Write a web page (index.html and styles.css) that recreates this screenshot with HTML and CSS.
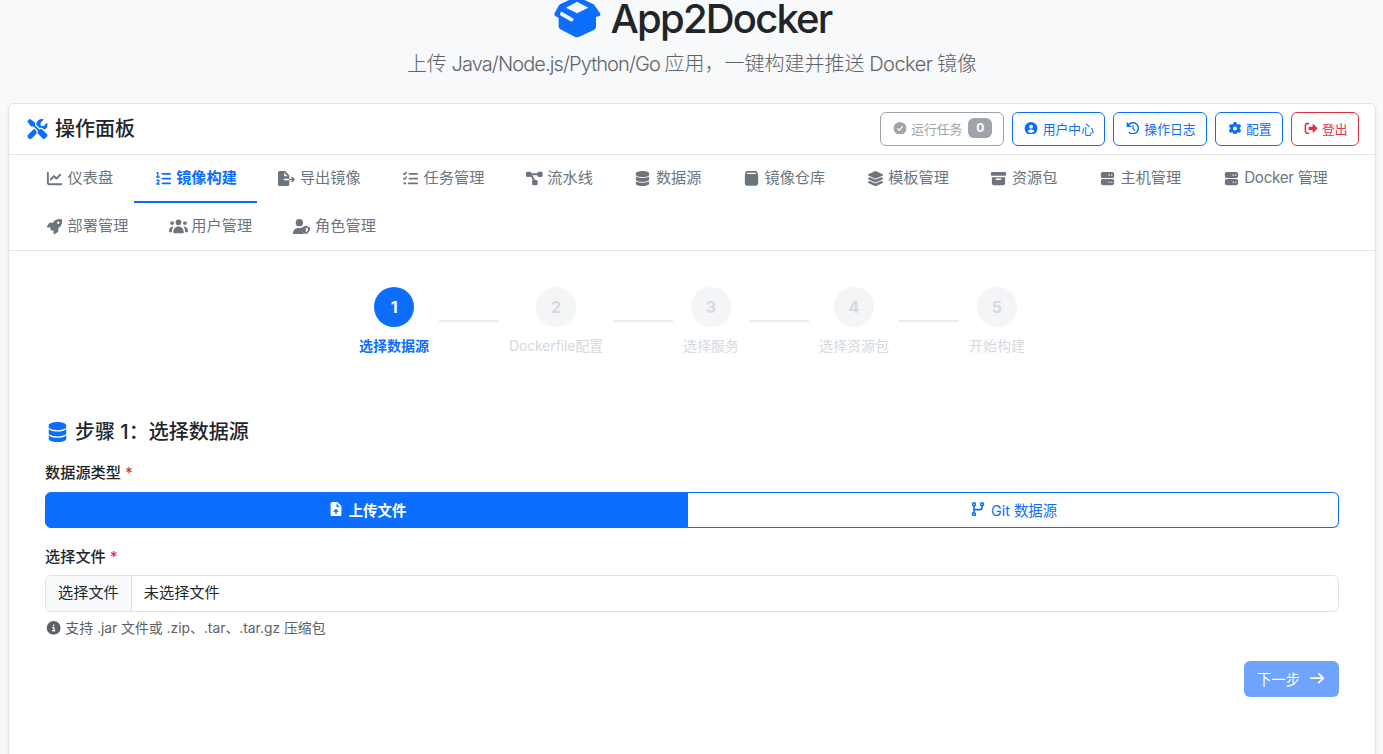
FILE: index.html
```html
<!DOCTYPE html>
<html lang="zh-CN">
<head>
    <meta charset="UTF-8">
    <meta name="viewport" content="width=device-width, initial-scale=1.0">
    <title>App2Docker</title>
    <link rel="stylesheet" href="styles.css">
</head>
<body>
    <svg class="sprite" xmlns="http://www.w3.org/2000/svg">
        <symbol id="i-box" viewBox="13 -18 150 150"><path fill-rule="evenodd" d="M80 -7Q88 -11 96 -7L136 12Q140 14 142 18L157 40Q160 46 155 48L145 51V80Q145 86 140 89L95 110Q88 113 81 110L38 88Q33 85 33 79V54L23 48Q18 45 21 39L34 16Q36 13 40 11ZM88 5L55 23L88 40L122 23ZM40 36Q34 42 40 47L69 64Q74 66 77 60Q79 56 74 54L45 37Q42 35 40 36Z"/></symbol>
        <symbol id="i-tools" viewBox="-64 0 640 512"><path d="M78.6 5C69.1-2.4 55.6-1.5 47 7L7 47c-8.5 8.5-9.4 22-2.1 31.6l80 104c4.5 5.9 11.6 9.4 19 9.4h54.1l109 109c-14.7 29-10 65.4 14.3 89.6l112 112c12.5 12.5 32.8 12.5 45.3 0l64-64c12.5-12.5 12.5-32.8 0-45.3l-112-112c-24.2-24.2-60.6-29-89.6-14.3l-109-109V104c0-7.5-3.5-14.5-9.4-19L78.6 5zM19.9 396.1C7.2 408.8 0 426.1 0 444.1C0 481.6 30.4 512 67.9 512c18 0 35.3-7.2 48-19.9L233.7 374.3c-7.8-20.9-9-43.6-3.6-65.1l-61.7-61.7L19.9 396.1zM512 144c0-10.5-1.1-20.7-3.2-30.5c-2.4-11.2-16.1-14.1-24.2-6l-63.9 63.9c-3 3-7.1 4.7-11.3 4.7H352c-8.8 0-16-7.2-16-16V102.6c0-4.2 1.7-8.3 4.7-11.3l63.9-63.9c8.1-8.1 5.2-21.8-6-24.2C388.7 1.1 378.5 0 368 0C288.5 0 224 64.5 224 144l0 .8 85.3 85.3c36-9.1 75.8 .5 104 28.7L429 274.5c49-23 83-72.8 83-130.5z"/></symbol>
        <symbol id="i-check" viewBox="-64 0 640 512"><path fill-rule="evenodd" d="M256 512A256 256 0 1 0 256 0a256 256 0 1 0 0 512zM374 192L258 353c-9 12-27 13-37 3l-72-72c-22-23 11-56 34-34l50 50 102-140c20-25 57 5 39 32z"/></symbol>
        <symbol id="i-user-circle" viewBox="-64 0 640 512"><path fill-rule="evenodd" d="M256 512A256 256 0 1 0 256 0a256 256 0 1 0 0 512zM256 112a76 76 0 1 1 0 152 76 76 0 1 1 0-152zM128 384c8-52 50-82 98-82h60c48 0 90 30 98 82-70 74-186 74-256 0z"/></symbol>
        <symbol id="i-history" viewBox="-64 0 640 512"><path class="stroke" stroke-width="60" d="M32 40v128h128M46 162A222 222 0 1 1 105 418"/><path class="stroke" stroke-width="48" d="M256 148v112l74 74"/></symbol>
        <symbol id="i-gear" viewBox="-64 0 640 512"><path d="M495.9 166.6c3.2 8.7 .5 18.4-6.4 24.6l-43.3 39.4c1.1 8.3 1.7 16.8 1.7 25.4s-.6 17.1-1.7 25.4l43.3 39.4c6.9 6.2 9.6 15.9 6.4 24.6c-4.4 11.9-9.7 23.3-15.8 34.3l-4.7 8.1c-6.6 11-14 21.4-22.1 31.2c-5.9 7.2-15.7 9.6-24.5 6.8l-55.7-17.7c-13.4 10.3-28.2 18.9-44 25.4l-12.5 57.1c-2 9.1-9 16.3-18.2 17.8c-13.8 2.3-28 3.5-42.5 3.5s-28.7-1.2-42.5-3.5c-9.2-1.5-16.2-8.7-18.2-17.8l-12.5-57.1c-15.8-6.5-30.6-15.1-44-25.4L83.1 425.9c-8.8 2.8-18.6 .3-24.5-6.8c-8.1-9.8-15.5-20.2-22.1-31.2l-4.7-8.1c-6.1-11-11.4-22.4-15.8-34.3c-3.2-8.7-.5-18.4 6.4-24.6l43.3-39.4C64.6 273.1 64 264.6 64 256s.6-17.1 1.7-25.4L22.4 191.2c-6.9-6.2-9.6-15.9-6.4-24.6c4.4-11.9 9.7-23.3 15.8-34.3l4.7-8.1c6.6-11 14-21.4 22.1-31.2c5.9-7.2 15.7-9.6 24.5-6.8l55.7 17.7c13.4-10.3 28.2-18.9 44-25.4l12.5-57.1c2-9.1 9-16.3 18.2-17.8C227.3 1.2 241.5 0 256 0s28.7 1.2 42.5 3.5c9.2 1.5 16.2 8.7 18.2 17.8l12.5 57.1c15.8 6.5 30.6 15.1 44 25.4l55.7-17.7c8.8-2.8 18.6-.3 24.5 6.8c8.1 9.8 15.5 20.2 22.1 31.2l4.7 8.1c6.1 11 11.4 22.4 15.8 34.3zM256 336a80 80 0 1 0 0-160 80 80 0 1 0 0 160z"/></symbol>
        <symbol id="i-logout" viewBox="-64 0 640 512"><path class="stroke" stroke-width="64" d="M160 64H96a64 64 0 0 0-64 64v256a64 64 0 0 0 64 64h64"/><path d="M502 278L358 422c-16 15-38 4-38-17v-85H192c-18 0-32-14-32-32v-64c0-18 14-32 32-32h128v-85c0-21 22-32 38-17l144 144c13 12 13 32 0 44z"/></symbol>
        <symbol id="i-chart" viewBox="-64 0 640 512"><path d="M64 64c0-17.7-14.3-32-32-32S0 46.3 0 64V400c0 44.2 35.8 80 80 80H480c17.7 0 32-14.3 32-32s-14.3-32-32-32H80c-8.8 0-16-7.2-16-16V64zm406.6 86.6c12.5-12.5 12.5-32.8 0-45.3s-32.8-12.5-45.3 0L320 210.7l-57.4-57.4c-12.5-12.5-32.8-12.5-45.3 0l-112 112c-12.5 12.5-12.5 32.8 0 45.3s32.8 12.5 45.3 0L240 221.3l57.4 57.4c12.5 12.5 32.8 12.5 45.3 0l128-128z"/></symbol>
        <symbol id="i-list-ol" viewBox="-64 0 640 512"><path class="stroke" stroke-width="64" d="M224 96h256M224 256h256M224 416h256"/><path class="stroke" stroke-width="46" d="M32 56h34v142M24 202h88M34 324c22-32 74-22 70 12-2 20-44 56-72 102h80"/></symbol>
        <symbol id="i-export" viewBox="-32 0 640 512"><path fill-rule="evenodd" d="M0 64C0 29 29 0 64 0h149c17 0 33 7 45 19l107 107c12 12 19 28 19 45v93H216c-32 0-32 48 0 48h168v136c0 35-29 64-64 64H64c-35 0-64-29-64-64V64zm208-6v94c0 13 11 24 24 24h94L208 58z"/><path d="M384 264h102l-31-31c-22-23 11-56 34-34l72 72c9 9 9 25 0 34l-72 72c-23 22-56-11-34-34l31-31H384z"/></symbol>
        <symbol id="i-tasks" viewBox="-64 0 640 512"><path class="stroke" stroke-width="62" d="M224 96h256M224 256h256M192 416h288"/><path class="stroke" stroke-width="46" d="M24 86l34 34 62-76M24 246l34 34 62-76"/><circle cx="64" cy="416" r="40"/></symbol>
        <symbol id="i-flow" viewBox="-32 0 640 512"><path class="stroke" stroke-width="64" d="M144 112h288M176 144l96 160"/><rect x="0" y="22" width="180" height="180" rx="48"/><rect x="384" y="22" width="180" height="180" rx="48"/><rect x="208" y="300" width="184" height="184" rx="48"/></symbol>
        <symbol id="i-database" viewBox="-96 0 640 512"><path d="M448 80v48c0 44.2-100.3 80-224 80S0 172.2 0 128V80C0 35.8 100.3 0 224 0S448 35.8 448 80zM393.2 214.7c20.8-7.4 39.9-16.9 54.8-28.6V288c0 44.2-100.3 80-224 80S0 332.2 0 288V186.1c14.9 11.8 34 21.2 54.8 28.6C99.7 230.7 159.5 240 224 240s124.3-9.3 169.2-25.3zM0 346.1c14.9 11.8 34 21.2 54.8 28.6C99.7 390.7 159.5 400 224 400s124.3-9.3 169.2-25.3c20.8-7.4 39.9-16.9 54.8-28.6V432c0 44.2-100.3 80-224 80S0 476.2 0 432V346.1z"/></symbol>
        <symbol id="i-registry" viewBox="-96 0 640 512"><path fill-rule="evenodd" d="M0 130L22 56c8-34 30-52 66-52h272c36 0 58 18 66 52l22 74v286c0 44-36 80-80 80H80c-44 0-80-36-80-80V130zM100 60c-14 0-22 6-26 18L68 100h312l-6-22c-4-12-12-18-26-18H100z"/></symbol>
        <symbol id="i-layers" viewBox="-32 0 640 512"><path d="M264.5 5.2c14.9-6.9 32.1-6.9 47 0l218.6 101c8.5 3.9 13.9 12.4 13.9 21.8s-5.4 17.9-13.9 21.8l-218.6 101c-14.9 6.9-32.1 6.9-47 0L45.9 149.8C37.4 145.8 32 137.3 32 128s5.4-17.9 13.9-21.8L264.5 5.2zM476.9 209.6l53.2 24.6c8.5 3.9 13.9 12.4 13.9 21.8s-5.4 17.9-13.9 21.8l-218.6 101c-14.9 6.9-32.1 6.9-47 0L45.9 277.8C37.4 273.8 32 265.3 32 256s5.4-17.9 13.9-21.8l53.2-24.6 152 70.2c23.4 10.8 50.4 10.8 73.8 0l152-70.2zm-152 198.2l152-70.2 53.2 24.6c8.5 3.9 13.9 12.4 13.9 21.8s-5.4 17.9-13.9 21.8l-218.6 101c-14.9 6.9-32.1 6.9-47 0L45.9 405.8C37.4 401.8 32 393.3 32 384s5.4-17.9 13.9-21.8l53.2-24.6 152 70.2c23.4 10.8 50.4 10.8 73.8 0z"/></symbol>
        <symbol id="i-archive" viewBox="-64 0 640 512"><rect y="32" width="512" height="128" rx="32"/><path fill-rule="evenodd" d="M32 208h448v208c0 35-29 64-64 64H96c-35 0-64-29-64-64V208zm152 48c-32 0-32 48 0 48h144c32 0 32-48 0-48H184z"/></symbol>
        <symbol id="i-server" viewBox="-96 0 640 512"><path fill-rule="evenodd" d="M64 32h320c35 0 64 29 64 64v80c0 35-29 64-64 64H64c-35 0-64-29-64-64V96c0-35 29-64 64-64zm216 80a24 24 0 1 0 0 48 24 24 0 1 0 0-48zm88 0a24 24 0 1 0 0 48 24 24 0 1 0 0-48zM64 272h320c35 0 64 29 64 64v80c0 35-29 64-64 64H64c-35 0-64-29-64-64v-80c0-35 29-64 64-64zm216 80a24 24 0 1 0 0 48 24 24 0 1 0 0-48zm88 0a24 24 0 1 0 0 48 24 24 0 1 0 0-48z"/></symbol>
        <symbol id="i-rocket" viewBox="-64 0 640 512"><path d="M156.6 384.9L125.7 354c-8.5-8.5-11.5-20.8-7.7-32.2c3-8.9 7-20.5 11.8-33.8L24 288c-8.6 0-16.6-4.6-20.9-12.1s-4.2-16.7 .2-24.1l52.5-88.5c13-21.9 36.5-35.3 61.9-35.3l82.3 0c2.4-4 4.8-7.7 7.2-11.3C289.1-4.1 411.1-8.1 483.9 5.3c11.6 2.1 20.6 11.2 22.8 22.8c13.4 72.9 9.3 194.8-111.4 276.7c-3.5 2.4-7.3 4.8-11.3 7.2v82.3c0 25.4-13.4 49-35.3 61.9l-88.5 52.5c-7.4 4.4-16.6 4.5-24.1 .2s-12.1-12.2-12.1-20.9V380.8c-14.1 4.9-26.4 8.9-35.7 11.9c-11.2 3.6-23.4 .5-31.8-7.8zM384 168a40 40 0 1 0 0-80 40 40 0 1 0 0 80z"/></symbol>
        <symbol id="i-users" viewBox="0 0 640 512"><circle cx="320" cy="112" r="96"/><circle cx="104" cy="136" r="64"/><circle cx="536" cy="136" r="64"/><path d="M144 448c0-112 66-192 176-192s176 80 176 192c0 20-14 32-32 32H176c-18 0-32-12-32-32zM0 424c0-110 54-186 158-168-44 46-64 104-62 192H26c-16 0-26-8-26-24zM640 424c0-110-54-186-158-168 44 46 64 104 62 192h70c16 0 26-8 26-24z"/></symbol>
        <symbol id="i-user-shield" viewBox="-32 0 640 512"><circle cx="216" cy="124" r="124"/><path d="M30 512c-18 0-30-12-30-30 0-104 78-182 180-182h72c18 0 34 2 50 7 0 90 28 155 84 205z"/><path fill-rule="evenodd" d="M424 230c6-3 14-3 20 0l116 46c10 4 17 13 16 24-1 74-26 160-132 210-6 3-14 3-20 0-106-50-131-136-132-210 0-11 7-20 17-24l115-46zm10 60v162c54-30 75-74 78-131l-78-31z"/></symbol>
        <symbol id="i-upload" viewBox="-128 0 640 512"><path fill-rule="evenodd" d="M0 64C0 29 29 0 64 0h149c17 0 33 7 45 19l107 107c12 12 19 28 19 45v277c0 35-29 64-64 64H64c-35 0-64-29-64-64V64zm208-6v94c0 13 11 24 24 24h94L208 58zm1 197c-10-9-25-9-34 0l-64 64c-22 23 11 56 34 34l23-23v78c0 32 48 32 48 0v-78l23 23c23 22 56-11 34-34l-64-64z"/></symbol>
        <symbol id="i-branch" viewBox="-96 0 640 512"><g class="stroke" stroke-width="56"><circle cx="80" cy="80" r="52"/><circle cx="368" cy="80" r="52"/><circle cx="80" cy="432" r="52"/><path d="M80 132v248M368 132v76a64 64 0 0 1-64 64H80"/></g></symbol>
        <symbol id="i-info" viewBox="-64 0 640 512"><path fill-rule="evenodd" d="M256 512A256 256 0 1 0 256 0a256 256 0 1 0 0 512zM224 160a32 32 0 1 1 64 0 32 32 0 1 1-64 0zm-8 64h48c13 0 24 11 24 24v88h8c32 0 32 48 0 48h-80c-32 0-32-48 0-48h24v-64h-24c-32 0-32-48 0-48z"/></symbol>
        <symbol id="i-arrow" viewBox="-64 0 640 512"><path class="stroke" stroke-width="62" d="M32 256h440M320 96l160 160-160 160"/></symbol>
    </svg>

    <header class="page-header">
        <h1><svg class="icon primary"><use href="#i-box"/></svg> App2Docker</h1>
        <p class="lead">上传 <span class="latin">Java/Node.js/Python/Go</span> 应用，一键构建并推送 <span class="latin-wide">Docker</span> 镜像</p>
    </header>

    <main class="card">
        <div class="card-header">
            <h2 class="card-title"><svg class="icon primary"><use href="#i-tools"/></svg>操作面板</h2>
            <div class="actions">
                <button class="btn-sm btn-gray" disabled><svg class="icon"><use href="#i-check"/></svg>运行任务<span class="badge">0</span></button>
                <button class="btn-sm"><svg class="icon"><use href="#i-user-circle"/></svg>用户中心</button>
                <button class="btn-sm"><svg class="icon"><use href="#i-history"/></svg>操作日志</button>
                <button class="btn-sm"><svg class="icon"><use href="#i-gear"/></svg>配置</button>
                <button class="btn-sm btn-danger"><svg class="icon"><use href="#i-logout"/></svg>登出</button>
            </div>
        </div>

        <nav class="tabs">
            <a class="tab"><svg class="icon"><use href="#i-chart"/></svg>仪表盘</a>
            <a class="tab active"><svg class="icon"><use href="#i-list-ol"/></svg>镜像构建</a>
            <a class="tab"><svg class="icon"><use href="#i-export"/></svg>导出镜像</a>
            <a class="tab"><svg class="icon"><use href="#i-tasks"/></svg>任务管理</a>
            <a class="tab"><svg class="icon"><use href="#i-flow"/></svg>流水线</a>
            <a class="tab"><svg class="icon"><use href="#i-database"/></svg>数据源</a>
            <a class="tab"><svg class="icon"><use href="#i-registry"/></svg>镜像仓库</a>
            <a class="tab"><svg class="icon"><use href="#i-layers"/></svg>模板管理</a>
            <a class="tab"><svg class="icon"><use href="#i-archive"/></svg>资源包</a>
            <a class="tab"><svg class="icon"><use href="#i-server"/></svg>主机管理</a>
            <a class="tab tab-docker"><svg class="icon"><use href="#i-server"/></svg>Docker 管理</a>
            <a class="tab"><svg class="icon"><use href="#i-rocket"/></svg>部署管理</a>
            <a class="tab"><svg class="icon"><use href="#i-users"/></svg>用户管理</a>
            <a class="tab"><svg class="icon"><use href="#i-user-shield"/></svg>角色管理</a>
        </nav>

        <div class="steps">
            <div class="step active"><span class="step-number">1</span><span class="step-label">选择数据源</span></div>
            <div class="step-line"></div>
            <div class="step"><span class="step-number">2</span><span class="step-label step-label-long">Dockerfile配置</span></div>
            <div class="step-line"></div>
            <div class="step"><span class="step-number">3</span><span class="step-label">选择服务</span></div>
            <div class="step-line"></div>
            <div class="step"><span class="step-number">4</span><span class="step-label">选择资源包</span></div>
            <div class="step-line"></div>
            <div class="step"><span class="step-number">5</span><span class="step-label">开始构建</span></div>
        </div>

        <section class="step-content">
            <h3 class="step-title"><svg class="icon primary"><use href="#i-database"/></svg>步骤 1：选择数据源</h3>

            <div class="label">数据源类型 <span class="required">*</span></div>
            <div class="btn-group">
                <button class="source source-file active"><svg class="icon"><use href="#i-upload"/></svg>上传文件</button>
                <button class="source source-git"><svg class="icon"><use href="#i-branch"/></svg>Git 数据源</button>
            </div>

            <div class="label">选择文件 <span class="required">*</span></div>
            <div class="file-input">
                <span class="file-button">选择文件</span>
                <span class="file-name">未选择文件</span>
            </div>
            <div class="hint"><svg class="icon"><use href="#i-info"/></svg>支持 .jar 文件或 .zip、.tar、.tar.gz 压缩包</div>

            <div class="footer">
                <button class="btn-next" disabled>下一步<svg class="icon"><use href="#i-arrow"/></svg></button>
            </div>
        </section>
    </main>
</body>
</html>
```
FILE: styles.css
```css
* {
    box-sizing: border-box;
}
body {
    margin: 0;
    height: 754px;
    padding: 0 7px 0 8px;
    overflow: hidden;
    font-family: Inter, "Noto Sans CJK SC", sans-serif;
    font-size: 15.2px;
    line-height: 1.5;
    color: #212529;
    background: #f8f9fb;
}
button {
    font-family: inherit;
}
h1, h2, h3, p {
    margin: 0;
}
.sprite {
    display: none;
}
.icon {
    width: 1.25em;
    height: 1em;
    flex: none;
    fill: currentColor;
}
.stroke {
    fill: none;
    stroke: currentColor;
    stroke-linecap: round;
    stroke-linejoin: round;
}
.primary {
    color: #0d6efd;
}

/* Page header */
.page-header {
    height: 103px;
    text-align: center;
}
.page-header h1 {
    display: flex;
    justify-content: center;
    align-items: center;
    gap: 8px;
    height: 38px;
    font-size: 40px;
    font-weight: 500;
    line-height: 38px;
    letter-spacing: -1.8px;
}
.page-header .icon {
    height: 50px;
}
.lead {
    margin-top: 11px;
    font-size: 20px;
    font-weight: 300;
    color: #5f6469;
    word-spacing: -1px;
}
.latin {
    letter-spacing: -0.9px;
}
.latin-wide {
    letter-spacing: -0.5px;
}

/* Card */
.card {
    height: 651px;
    border: 1px solid #e3e4e8;
    border-bottom: none;
    border-radius: 6px 6px 0 0;
    background: #fff;
    box-shadow: 0 2px 4px rgba(0, 0, 0, 0.075);
}
.card-header {
    display: flex;
    justify-content: space-between;
    align-items: center;
    height: 51px;
    padding: 0 16px;
    border-bottom: 1px solid #e3e4e6;
}
.card-title {
    display: flex;
    align-items: center;
    gap: 5px;
    font-size: 20px;
    font-weight: 500;
}
.actions {
    display: flex;
    gap: 8px;
}
.btn-sm {
    display: flex;
    align-items: center;
    height: 34px;
    padding: 0 10.5px 2px;
    border: 1px solid #0d6efd;
    border-radius: 6px;
    background: #fff;
    color: #0d6efd;
    font-size: 12.8px;
}
.btn-sm .icon {
    margin-right: 3.4px;
}
.btn-gray {
    border-color: #6c757d;
    color: #6c757d;
    opacity: 0.65;
}
.btn-danger {
    border-color: #dc3545;
    color: #dc3545;
}
.badge {
    width: 24px;
    height: 20px;
    margin-left: 6px;
    border-radius: 6px;
    background: #6c757d;
    color: #fff;
    font-size: 12px;
    font-weight: 700;
    line-height: 20px;
    text-align: center;
}

/* Tabs */
.tabs {
    display: flex;
    flex-wrap: wrap;
    height: 96px;
    padding: 0 16px;
    border-bottom: 1px solid #e3e4e6;
}
.tab {
    display: flex;
    align-items: center;
    gap: 3.6px;
    height: 47.5px;
    padding: 2px 20.4px 0 20px;
    border-bottom: 2px solid transparent;
    color: #6c757d;
}
.tab.active {
    border-bottom-color: #0d6efd;
    color: #0d6efd;
    font-weight: 600;
}
.tab-docker {
    letter-spacing: -0.3px;
}

/* Steps */
.steps {
    display: flex;
    justify-content: center;
    align-items: center;
    gap: 10px;
    height: 70px;
    margin-top: 35px;
}
.step {
    display: flex;
    flex-direction: column;
    align-items: center;
    gap: 8px;
    opacity: 0.5;
}
.step-number {
    width: 40px;
    height: 40px;
    border-radius: 50%;
    background: #e9ecef;
    color: #adb5bd;
    font-size: 16px;
    font-weight: 700;
    line-height: 40px;
    text-align: center;
}
.step-label {
    font-size: 14px;
    line-height: 21px;
    color: #adb5bd;
}
.step-label-long {
    letter-spacing: -0.15px;
}
.step.active {
    opacity: 1;
}
.step.active .step-number {
    background: #0d6efd;
    color: #fff;
}
.step.active .step-label {
    color: #0d6efd;
    font-weight: 600;
}
.step-line {
    width: 60px;
    height: 2px;
    background: #e9ecef;
}

/* Step 1 */
.step-content {
    padding: 61px 36px 0;
}
.step-title {
    display: flex;
    align-items: center;
    gap: 5px;
    height: 30px;
    margin-bottom: 14px;
    font-size: 20px;
    font-weight: 500;
}
.label {
    height: 23px;
    margin-bottom: 8px;
    padding-top: 1px;
    font-weight: 500;
}
.required {
    color: #dc3545;
}
.btn-group {
    display: flex;
    height: 36px;
    margin-bottom: 16px;
}
.btn-group + .label {
    padding-top: 2px;
}
.source {
    display: flex;
    justify-content: center;
    align-items: center;
    gap: 4px;
    padding: 0 6px 2px;
    border: 1px solid #0d6efd;
    background: #fff;
    color: #0d6efd;
    font-size: 14.4px;
}
.source-file {
    width: 643px;
    border-radius: 6px 0 0 6px;
}
.source-git {
    flex: 1;
    border-left: none;
    border-radius: 0 6px 6px 0;
}
.source.active {
    background: #0d6efd;
    color: #fff;
    font-weight: 600;
}
.file-input {
    display: flex;
    align-items: center;
    height: 37px;
    border: 1px solid #dee2e6;
    border-radius: 6px;
    overflow: hidden;
}
.file-button {
    padding: 6px 12px;
    border-right: 1px solid #dee2e6;
    background: #f8f9fb;
}
.file-name {
    padding-left: 12px;
}
.hint {
    display: flex;
    align-items: center;
    gap: 3px;
    height: 20px;
    margin-top: 6px;
    font-size: 13.85px;
    color: #5c6166;
}
.footer {
    display: flex;
    justify-content: flex-end;
    margin-top: 23px;
}
.btn-next {
    display: flex;
    align-items: center;
    justify-content: center;
    gap: 8px;
    width: 95px;
    height: 36px;
    padding: 0 6px 2px;
    border: none;
    border-radius: 6px;
    background: #6ea4fe;
    color: #fff;
    font-size: 14.4px;
}
```
